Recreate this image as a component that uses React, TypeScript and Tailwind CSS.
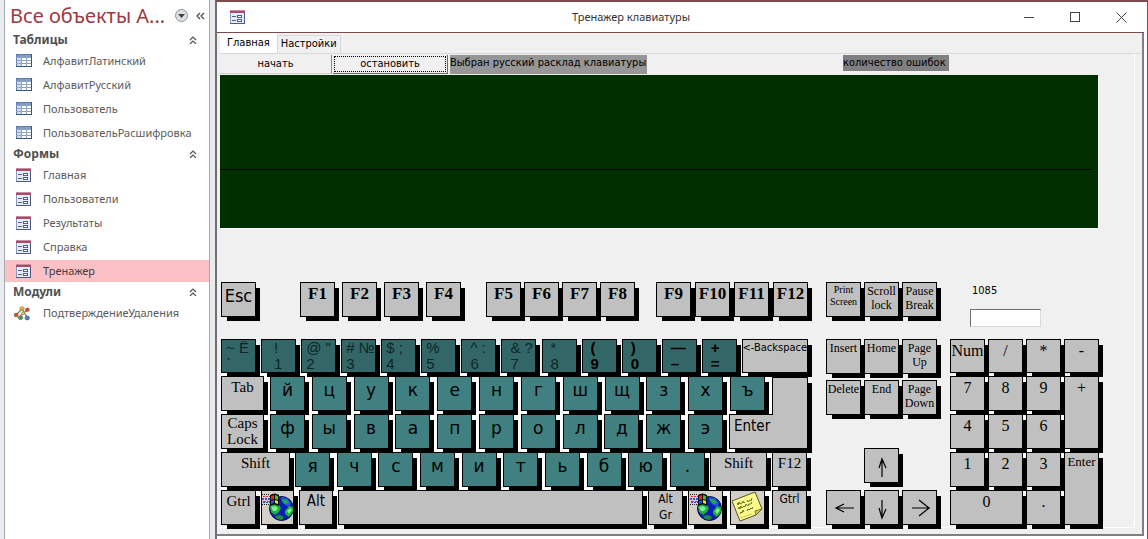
import type { ReactNode } from "react";
import clsx from "clsx";

const TABLES = ["АлфавитЛатинский", "АлфавитРусский", "Пользователь", "ПользовательРасшифровка"];
const FORMS = ["Главная", "Пользователи", "Результаты", "Справка", "Тренажер"];
const MODULES = ["ПодтверждениеУдаления"];

const UI = "font-['Noto_Sans',sans-serif]";
const FORM = "font-['DejaVu_Sans_Condensed','DejaVu_Sans',sans-serif]";
const SERIF = "font-['Liberation_Serif',serif]";

/* ---------- icons ---------- */

const TableIcon = () => (
  <svg width="16" height="14" viewBox="0 0 16 14" className="shrink-0">
    <rect x="0.5" y="0.5" width="15" height="12" fill="#fff" stroke="#5d7aa8" />
    <rect x="1" y="1" width="14" height="2" fill="#7d9ccb" />
    <rect x="1" y="3" width="4" height="9" fill="#cfdff2" />
    <path d="M0 3.5h16M0 6.5h16M0 9.5h16M5.5 1v12M10.5 1v12" stroke="#8ba3c8" />
    <path d="M0 12.5h16M15.5 0v13" stroke="#39547f" />
  </svg>
);

const FormIcon = () => (
  <svg width="15" height="15" viewBox="0 0 15 15" className="shrink-0">
    <rect x="0.5" y="0.5" width="14" height="13" fill="#e6edf8" stroke="#8d9abb" />
    <rect x="0" y="0" width="15" height="3" fill="#a94a70" />
    <path d="M0 0.5h15" stroke="#cf87a2" />
    <path d="M2 6.5h4M2 10.5h4" stroke="#4a5f92" />
    <rect x="7.5" y="5.5" width="4" height="2" fill="#fff" stroke="#4a5f92" />
    <rect x="7.5" y="9.5" width="4" height="2" fill="#fff" stroke="#4a5f92" />
    <path d="M0 13.5h15M14.5 3v11" stroke="#4b5a88" />
  </svg>
);

const ModuleIcon = () => (
  <svg width="17" height="15" viewBox="0 0 17 15" className="-ml-[2px] shrink-0">
    <path d="M2 9L8 3l5 8M4 12l9-8" stroke="#7c7c7c" strokeWidth="1.2" fill="none" />
    <ellipse cx="8" cy="2.6" rx="2.2" ry="1.8" fill="#e5b84a" stroke="#8d6a1c" strokeWidth=".6" />
    <ellipse cx="13.4" cy="3.8" rx="1.9" ry="1.7" fill="#d3553b" stroke="#812c1b" strokeWidth=".6" />
    <ellipse cx="2.2" cy="9" rx="2" ry="1.8" fill="#d9502e" stroke="#812c1b" strokeWidth=".6" />
    <ellipse cx="6.6" cy="11.8" rx="2.1" ry="1.8" fill="#4fa24a" stroke="#255c24" strokeWidth=".6" />
    <ellipse cx="13.2" cy="12" rx="2.2" ry="1.9" fill="#4a83cc" stroke="#234a85" strokeWidth=".6" />
    <ellipse cx="9" cy="7.4" rx="1.6" ry="1.4" fill="#f1d27c" stroke="#8d6a1c" strokeWidth=".6" />
  </svg>
);

const Chevrons = () => (
  <svg width="8" height="8" viewBox="0 0 8 8" fill="none" stroke="#555" strokeWidth="1.2">
    <path d="M1 4l3-3 3 3M1 8l3-3 3 3" />
  </svg>
);

const GlobeIcon = () => (
  <svg width="33" height="33" viewBox="0 0 33 33">
    <circle cx="20.500" cy="17.500" r="12" fill="#0b1fb0" stroke="#05103a" />
    <path d="M20 6l6 1 4 5-2 4-4-2-3-3z" fill="#2553e8" />
    <path d="M20 8l6 1 2 3-4 1z" fill="#1fae3e" />
    <path d="M9 15l4-3 5 2 2 3-2 4-4 3-4-3z" fill="#1fae3e" />
    <path d="M10 16l4-1 3 2-2 3-3 0z" fill="#7df08d" />
    <path d="M24 20l4-5 4 1v5l-4 5-4-3z" fill="#1fae3e" />
    <path d="M26 20l3-3 2 2-3 4z" fill="#7df08d" />
    <path d="M14 25l5-1 4 2-2 3-5-1z" fill="#1d8f3c" />
    <path d="M9 4c3-2 6-2 9 0v11c-3-2-6-2-9 0z" fill="#0a0a0a" />
    <path d="M10 5l3-1v4l-3 1z" fill="#e2281f" />
    <path d="M14 4l3 1v4l-3-1z" fill="#35c22f" />
    <path d="M10 10l3-1v3l-3 1z" fill="#2b4ff0" />
    <path d="M14 9l3 1v3l-3-1z" fill="#f0dc2c" />
    <path d="M1 3.500h8" stroke="#222" strokeDasharray="1 1" />
    <path d="M2 5.500h7M1 8.500h8" stroke="#d52b55" strokeDasharray="2 1" />
    <path d="M1 7.500h8M2 11.500h7" stroke="#3a4fd0" strokeDasharray="2 1" />
    <path d="M2 10.500h7" stroke="#d52b55" strokeDasharray="3 1" />
    <path d="M1 13.500h8" stroke="#222" strokeDasharray="1 1" />
  </svg>
);

const NoteIcon = () => (
  <svg width="33" height="33" viewBox="0 0 33 33">
    <path d="M1 10L24 1l7 17-6 6-16 6z" fill="#fbfb8c" stroke="#55552a" />
    <path d="M31 18l-7 2 1 4z" fill="#d4d45a" stroke="#55552a" strokeWidth=".8" />
    <path d="M6 12l1 2 1-3 1 2 2-1 1-2 1 2 1-1m2-2l1 2 2-2 1 1 1-3" fill="none" stroke="#6b6b2c" />
    <path d="M7 18l1-2 1 2 1-3 1 2 2-2 1 1 1-3 2 2 1-2 2 0 1-2" fill="none" stroke="#6b6b2c" />
    <path d="M9 23l1-2 1 1 1-3 1 2m3-1l1-2 1 1 2-2 1 1 1-2" fill="none" stroke="#6b6b2c" />
    <path d="M9 27l12-4" stroke="#c5c55c" />
  </svg>
);

const ARROWS = {
  up: "M17 28V10M14 19l3-9 4 9",
  down: "M17 9v18M14 17l3 10 4-9",
  left: "M27 17H9M17 13l-8 4 8 4",
  right: "M9 17h18M16 9l10 8-10 8",
};

const Arrow = ({ dir }: { dir: keyof typeof ARROWS }) => (
  <svg width="33" height="33" viewBox="0 0 33 33" fill="none" stroke="#000" strokeWidth="1.2">
    <path d={ARROWS[dir]} />
  </svg>
);

/* ---------- keys ---------- */

type KeyProps = { children?: ReactNode; className?: string; label?: string };

const Key = ({ children, className = "h-[35px] w-[35px]", label }: KeyProps) => (
  <button
    type="button"
    aria-label={label}
    className={clsx(
      "flex shrink-0 flex-col justify-start border border-black whitespace-nowrap shadow-[5px_5px_0_-1px_#000]",
      !className.includes("items-") && "items-center",
      !className.includes("bg-") && "bg-[#c0c0c0]",
      className
    )}
  >
    {children}
  </button>
);

const Letters = ({ keys }: { keys: string }) => (
  <div className="flex flex-1 justify-between">
    {keys.split("").map((k) => (
      <Key
        key={k}
        className="h-[35px] w-[35px] bg-[#408080] font-['DejaVu_Sans',sans-serif] text-[17px] leading-[27px]"
      >
        {k}
      </Key>
    ))}
  </div>
);

const FKeys = ({ keys, className }: { keys: string[]; className: string }) => (
  <div className={clsx("flex", className)}>
    {keys.map((k) => (
      <Key key={k} className={`h-[35px] w-[35px] text-[17px] leading-[22px] font-bold ${SERIF}`}>
        {k}
      </Key>
    ))}
  </div>
);

const DIGITS = [
  ["~ Ё", "`", "pl-1"],
  ["!", "1", "pl-3"],
  ['@ "', "2", "pl-1"],
  ["# №", "3", "pl-1"],
  ["$ ;", "4", "pl-1"],
  ["%", "5", "pl-1"],
  ["^ :", "6", "pl-2"],
  ["& ?", "7", "pl-2"],
  ["*", "8", "pl-2"],
  ["(", "9", "pl-2"],
  [")", "0", "pl-2"],
  ["—", "–", "pl-2"],
  ["+", "=", "pl-2"],
];

const DigitKey = ({ top, bottom, pad }: { top: string; bottom: string; pad: string }) => (
  <Key
    className={clsx(
      "h-[34px] w-[35px] items-start bg-[#336666] font-['Liberation_Sans',sans-serif] text-[15px] leading-4",
      "()—+".includes(top) ? "font-bold" : "text-[#0e2626]",
      pad
    )}
  >
    <span>{top}</span>
    <span>{bottom}</span>
  </Key>
);

const MainKeyboard = () => (
  <div className="w-[587px] shrink-0">
    <div className="flex">
      <Key className={`h-[35px] w-[35px] text-[18px] leading-[26px] ${FORM}`}>Esc</Key>
      <FKeys keys={["F1", "F2", "F3", "F4"]} className="ml-11 gap-[7px]" />
      <FKeys keys={["F5", "F6", "F7", "F8"]} className="ml-[25px] gap-[3px]" />
      <FKeys keys={["F9", "F10", "F11", "F12"]} className="ml-[21px] gap-1" />
    </div>
    <div className="mt-[22px] flex justify-between">
      {DIGITS.map(([top, bottom, pad]) => (
        <DigitKey key={bottom} top={top} bottom={bottom} pad={pad} />
      ))}
      <Key className={`h-[34px] w-[66px] text-[11px] leading-4 ${FORM}`}>&lt;-Backspace</Key>
    </div>
    <div className="space-y-[3px] bg-white pt-[3px]">
      <div className="flex gap-[6px] pr-[43px]">
        <Key className={`h-[35px] w-[43px] text-[15px] leading-5 ${SERIF}`}>Tab</Key>
        <Letters keys="йцукенгшщзхъ" />
      </div>
      <div className="flex gap-[6px]">
        <Key className={`h-[35px] w-[43px] text-[15px] leading-4 ${SERIF}`}>
          <span>Caps</span>
          <span>Lock</span>
        </Key>
        <Letters keys="фывапролджэ" />
        <Key className={`relative h-[35px] w-[79px] bg-[#c0c0c0] text-[15px] leading-[22px] ${FORM}`}>
          <span className="w-full pl-1 text-left">Enter</span>
          <span className="absolute -right-px bottom-full h-[38px] w-9 border border-b-0 border-black bg-[#c0c0c0] shadow-[5px_5px_0_-1px_#000]" />
          <span className="absolute -top-px right-0 h-3 w-[34px] bg-[#c0c0c0]" />
          <span className="absolute top-0 -right-[5px] h-[10px] w-1 bg-black" />
        </Key>
      </div>
      <div className="flex gap-[5px] pr-px">
        <Key className={`h-[35px] w-[69px] text-[15px] leading-5 ${SERIF}`}>Shift</Key>
        <Letters keys="ячсмитьбю." />
        <Key className={`h-[35px] w-[57px] text-[15px] leading-5 ${SERIF}`}>Shift</Key>
        <Key className={`h-[35px] w-[35px] text-[15px] leading-5 ${SERIF}`}>F12</Key>
      </div>
      <div className="flex gap-[5px] pr-px">
        <Key className={`h-[35px] w-[35px] text-[15px] leading-5 ${SERIF}`}>Gtrl</Key>
        <Key label="Windows" className="h-[35px] w-[33px] bg-[#d4d0c8]">
          <GlobeIcon />
        </Key>
        <Key className={`h-[35px] w-[34px] text-[15px] leading-5 ${FORM}`}>Alt</Key>
        <Key label="Пробел" className="h-[35px] flex-1" />
        <Key className={`h-[35px] w-[35px] text-[12px] leading-4 ${FORM}`}>
          <span>Alt</span>
          <span>Gr</span>
        </Key>
        <div className="flex gap-[7px]">
          <Key label="Windows" className="h-[35px] w-[35px] bg-[#d4d0c8]">
            <GlobeIcon />
          </Key>
          <Key label="Меню" className="h-[35px] w-[35px] bg-[#d4d0c8]">
            <NoteIcon />
          </Key>
          <Key className={`h-[35px] w-[35px] text-[12px] leading-4 ${FORM}`}>Gtrl</Key>
        </div>
      </div>
    </div>
  </div>
);

const NavKey = ({ lines, small }: { lines: string[]; small?: boolean }) => (
  <Key
    className={clsx(
      "h-[35px] w-[35px] pt-px font-['Liberation_Serif',serif]",
      small ? "text-[10px] leading-3" : "text-[12px] leading-[14px]"
    )}
  >
    {lines.map((l) => (
      <span key={l}>{l}</span>
    ))}
  </Key>
);

const NavCluster = () => (
  <div className="ml-[18px] flex shrink-0 flex-col">
    <div className="flex gap-[3px]">
      <NavKey small lines={["Print", "Screen"]} />
      <NavKey lines={["Scroll", "lock"]} />
      <NavKey lines={["Pause", "Break"]} />
    </div>
    <div className="mt-[22px] grid grid-cols-3 gap-x-[3px] gap-y-[6px]">
      <NavKey lines={["Insert"]} />
      <NavKey lines={["Home"]} />
      <NavKey lines={["Page", "Up"]} />
      <NavKey lines={["Delete"]} />
      <NavKey lines={["End"]} />
      <NavKey lines={["Page", "Down"]} />
    </div>
    <div className="mt-auto flex flex-col items-center gap-[7px]">
      <Key label="Вверх">
        <Arrow dir="up" />
      </Key>
      <div className="flex gap-[3px]">
        <Key label="Влево">
          <Arrow dir="left" />
        </Key>
        <Key label="Вниз">
          <Arrow dir="down" />
        </Key>
        <Key label="Вправо">
          <Arrow dir="right" />
        </Key>
      </div>
    </div>
  </div>
);

const NumKey = ({ children, className = "" }: KeyProps) => (
  <Key className={clsx("text-[16px] leading-[22px] font-['Liberation_Serif',serif]", className)}>{children}</Key>
);

const NumPad = () => (
  <div className="ml-[13px] flex shrink-0 flex-col">
    <div className={`flex h-[57px] flex-col items-start pl-5 text-[11px] ${FORM}`}>
      <label htmlFor="code" className="pl-[2px] leading-[18px]">
        1085
      </label>
      <input
        id="code"
        className="mt-[9px] h-[18px] w-[71px] border border-[#d8d8d8] border-t-[#707070] border-l-[#707070] bg-white px-1"
      />
    </div>
    <div className="grid grid-cols-[35px_35px_35px_35px] grid-rows-[34px_35px_35px_35px_35px] gap-[3px] bg-[linear-gradient(#f0f0f0_36px,#fff_36px)]">
      <NumKey>Num</NumKey>
      <NumKey>/</NumKey>
      <NumKey>*</NumKey>
      <NumKey>-</NumKey>
      <NumKey>7</NumKey>
      <NumKey>8</NumKey>
      <NumKey>9</NumKey>
      <NumKey className="row-span-2">+</NumKey>
      <NumKey>4</NumKey>
      <NumKey>5</NumKey>
      <NumKey>6</NumKey>
      <NumKey>1</NumKey>
      <NumKey>2</NumKey>
      <NumKey>3</NumKey>
      <Key className={`row-span-2 text-[13px] leading-[18px] ${SERIF}`}>Enter</Key>
      <NumKey className="col-span-2">0</NumKey>
      <NumKey>.</NumKey>
    </div>
  </div>
);

/* ---------- navigation pane ---------- */

const NavGroup = ({ title, items, icon, active }: { title: string; items: string[]; icon: ReactNode; active?: string }) => (
  <section>
    <div className="flex h-[18px] items-center justify-between pr-3 pl-2">
      <h2 className="text-[12px] leading-[18px] font-bold text-[#4f4f4f]">{title}</h2>
      <button type="button" aria-label={`Свернуть ${title}`}>
        <Chevrons />
      </button>
    </div>
    <ul>
      {items.map((item) => (
        <li key={item} className="h-6 py-px">
          <a
            href="#"
            className={clsx(
              "flex h-[22px] items-center pl-[11px] text-[11px]",
              item === active ? "bg-[#fbc1c4] text-[#3f3f3f]" : "text-[#5a5a5a]"
            )}
          >
            <span className="w-[27px]">{icon}</span>
            {item}
          </a>
        </li>
      ))}
    </ul>
  </section>
);

const Sidebar = () => (
  <aside className={`w-[212px] shrink-0 bg-[#e9ebee] pr-[2px] pl-1 ${UI}`}>
    <div className="h-full border-x border-[#a4aab3] bg-white">
      <div className="flex h-[31px] items-center pl-[5px]">
        <h1 className="flex-1 text-[20px] whitespace-nowrap text-[#9c3a3f]">Все объекты А...</h1>
        <button
          type="button"
          aria-label="Выбрать категорию"
          className="mr-2 flex h-[13px] w-[13px] items-center justify-center rounded-full border border-[#8e939b] bg-[#dcdfe4]"
        >
          <svg width="7" height="4" viewBox="0 0 7 4">
            <path d="M0 0h7L3.500 4z" fill="#444" />
          </svg>
        </button>
        <button type="button" aria-label="Скрыть панель" className="mr-1">
          <svg width="9" height="8" viewBox="0 0 9 8" fill="none" stroke="#444" strokeWidth="1.2">
            <path d="M4 1L1 4l3 3M8 1L5 4l3 3" />
          </svg>
        </button>
      </div>
      <NavGroup title="Таблицы" items={TABLES} icon={<TableIcon />} />
      <NavGroup title="Формы" items={FORMS} icon={<FormIcon />} active="Тренажер" />
      <NavGroup title="Модули" items={MODULES} icon={<ModuleIcon />} />
    </div>
  </aside>
);

/* ---------- form window ---------- */

const TitleBar = () => (
  <header className={`flex h-[31px] items-center border-b border-[#7d4a4e] bg-white text-[11px] text-[#333] ${UI}`}>
    <div className="w-[39px] pl-[13px]">
      <FormIcon />
    </div>
    <div className="flex-1 text-center">Тренажер клавиатуры</div>
    <div className="flex w-[138px] text-[#444]">
      <button type="button" aria-label="Свернуть" className="flex flex-1 justify-center">
        <svg width="11" height="11" viewBox="0 0 11 11" stroke="currentColor">
          <path d="M0 5.500h10" />
        </svg>
      </button>
      <button type="button" aria-label="Развернуть" className="flex flex-1 justify-center">
        <svg width="11" height="11" viewBox="0 0 11 11" fill="none" stroke="currentColor">
          <rect x="0.5" y="0.5" width="9" height="9" />
        </svg>
      </button>
      <button type="button" aria-label="Закрыть" className="flex flex-1 justify-center">
        <svg width="11" height="11" viewBox="0 0 11 11" stroke="currentColor">
          <path d="M0.500 0.500l10 10M10.500 0.500l-10 10" />
        </svg>
      </button>
    </div>
  </header>
);

const TrainerForm = () => (
  <main className={`min-w-0 flex-1 bg-[#f0f0f0] pl-[3px] text-[11px] text-black ${FORM}`}>
    <div role="tablist" className="flex h-[21px] items-end border-b border-[#d9d9d9]">
      <button type="button" role="tab" aria-selected="true" className="h-5 bg-white px-[7px]">
        Главная
      </button>
      <button type="button" role="tab" aria-selected="false" className="h-[18px] border border-b-0 border-[#d9d9d9] px-[3px]">
        Настройки
      </button>
    </div>
    <div className="mr-[7px] border-r border-b border-white pb-[2px]">
      <div className="flex h-[21px] items-start pt-px whitespace-nowrap">
        <button type="button" className="h-[19px] w-[112px] border-r border-b border-[#8a8a8a] border-b-[#d0d0d0] pt-px">
          начать
        </button>
        <button type="button" className="ml-px h-[19px] w-[115px] border-r border-b border-[#6a6a6a] p-px">
          <span className="flex h-full items-center justify-center border border-dotted border-black">остановить</span>
        </button>
        <span className="ml-[2px] h-[19px] w-[197px] bg-[#969696] leading-[15px]">Выбран русский расклад клавиатуры</span>
        <span className="mr-[185px] ml-auto h-4 w-[106px] bg-[#808080] leading-[15px]">количество ошибок</span>
      </div>
      <div className="mr-[35px] h-[154px] border-r border-b border-white bg-[#003000]">
        <div className="mr-[6px] h-[95px] border-b border-black" />
      </div>
      <div className="mt-[53px] flex pl-px">
        <MainKeyboard />
        <NavCluster />
        <NumPad />
      </div>
    </div>
  </main>
);

export default function App() {
  return (
    <div className="flex min-h-screen bg-[#e9ebee]">
      <Sidebar />
      <div className="ml-[3px] flex min-w-0 flex-1 flex-col border-t-2 border-r border-l-2 border-[#7d4a4e] border-l-[#707070] bg-white pr-[3px] pb-[3px]">
        <TitleBar />
        <div className="flex flex-1 border-r-2 border-b-2 border-[#808080] bg-[#f0f0f0]">
          <TrainerForm />
        </div>
      </div>
    </div>
  );
}
